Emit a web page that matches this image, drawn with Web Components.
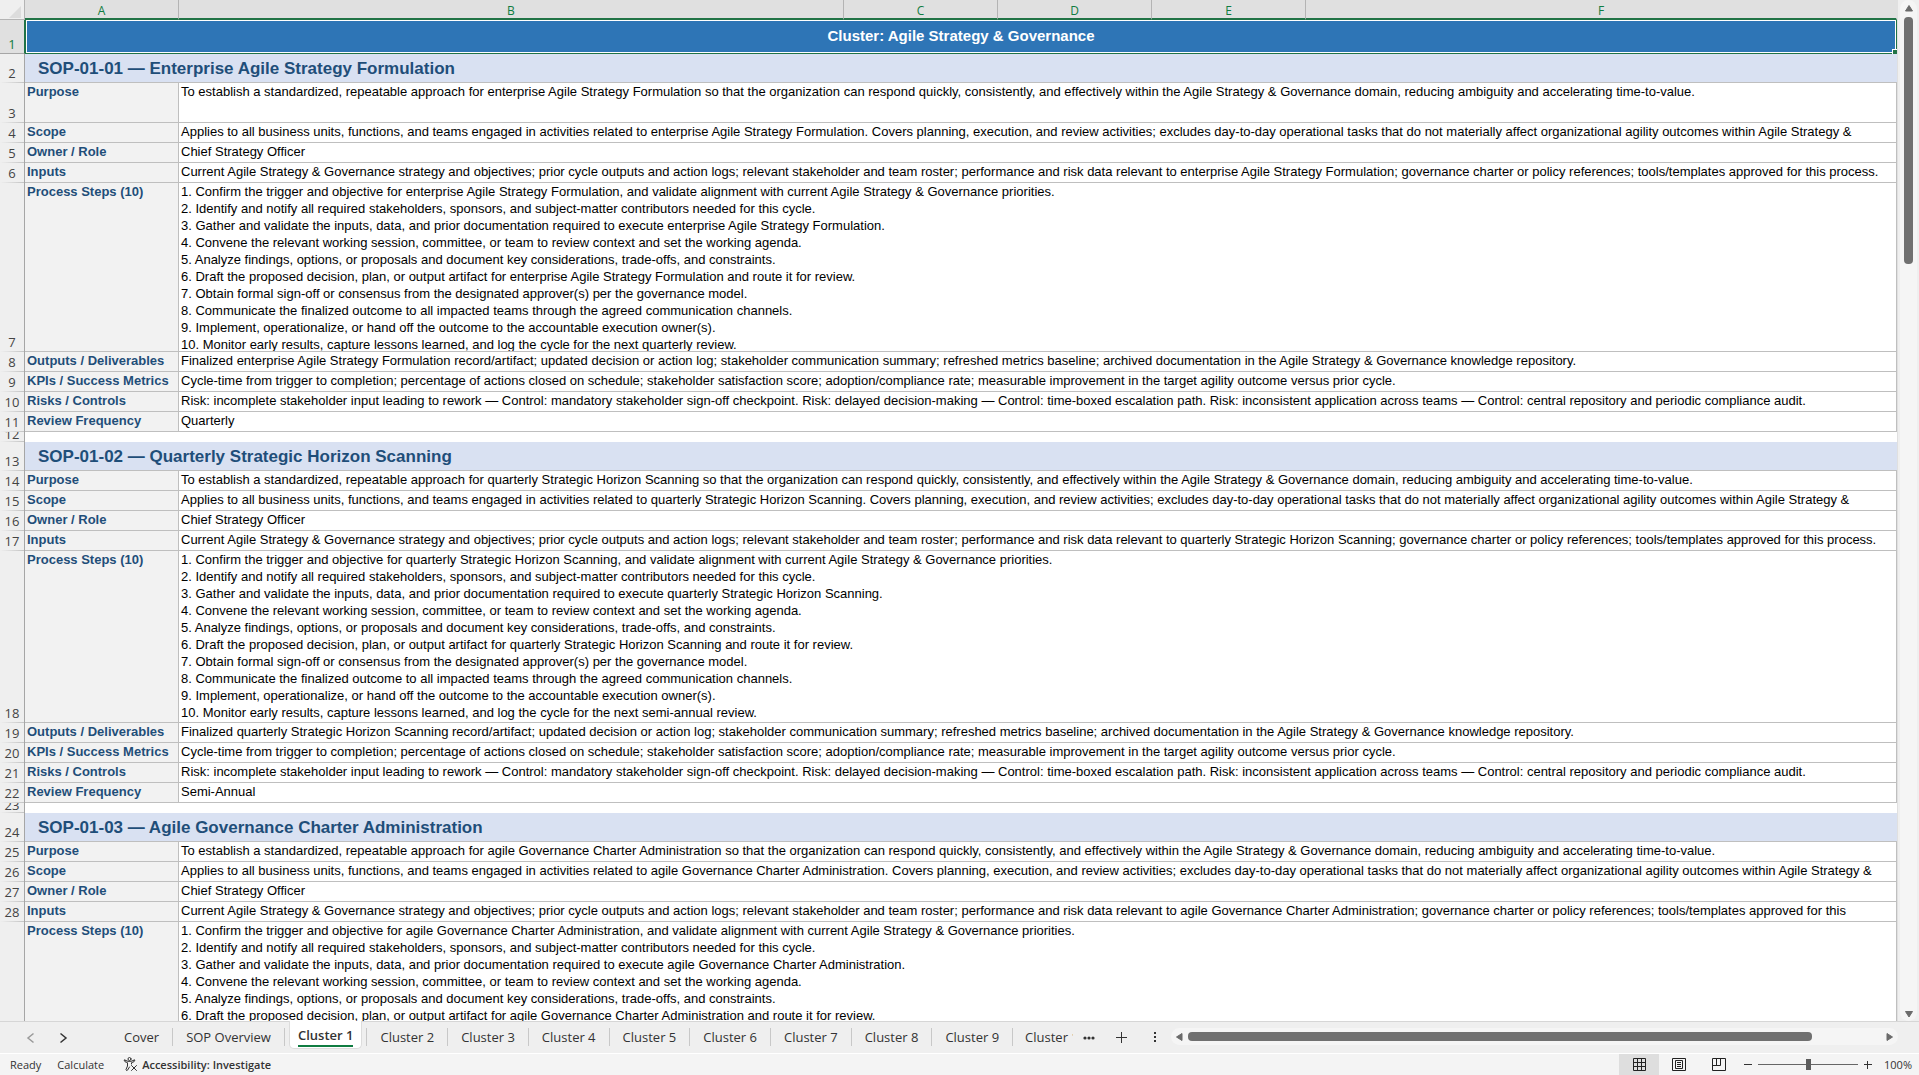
<!DOCTYPE html>
<html lang="en">
<head>
<meta charset="utf-8">
<title>Agile SOP Workbook</title>
<style>
  html, body {
    margin: 0;
    height: 100%;
    overflow: hidden;
  }
  body {
    font-family: "Liberation Sans", Arial, sans-serif;
    font-size: 13px;
    --ui-font: "Open Sans", "Noto Sans", sans-serif;
    --line: #bfbfbf;
    --green: #107c41;
    --select: #217346;
  }
</style>
</head>
<body>
<work-book></work-book>

<script>
const BASE = `
  * { box-sizing: border-box; }
  h2, ol, input, button { margin: 0; padding: 0; }
  button { border: 0; background: none; font: inherit; color: inherit; }`

// what differs between the procedures, everything else is shared wording
const SOPS = [
  { id: 'SOP-01-01', level: 'Enterprise', name: 'Agile Strategy Formulation', review: 'Quarterly', cycle: 'quarterly', purpose: 40, steps: 169, inputsEnd: ' process.' },
  { id: 'SOP-01-02', level: 'Quarterly', name: 'Strategic Horizon Scanning', review: 'Semi-Annual', cycle: 'semi-annual', purpose: 20, steps: 172, inputsEnd: ' process.' },
  { id: 'SOP-01-03', level: 'Agile', name: 'Governance Charter Administration', review: 'Annual', cycle: 'annual', purpose: 20, steps: 172, inputsEnd: '' }
]

class WorkBook extends HTMLElement {
  constructor () {
    super()
    this.attachShadow({ mode: 'open' })
  }

  connectedCallback () {
    this.shadowRoot.innerHTML = `
      <style>
        ${BASE}
        :host {
          display: flex;
          flex-direction: column;
          height: 100vh;
          background: #efefef;
        }
        main {
          display: flex;
          flex: 1;
          min-height: 0;
        }
        sheet-grid { flex: 1; min-width: 0; }
      </style>
      <main>
        <sheet-grid></sheet-grid>
        <scroll-bar direction="vertical"></scroll-bar>
      </main>
      <sheet-tabs></sheet-tabs>
      <status-bar></status-bar>`
  }
}

class SheetGrid extends HTMLElement {
  constructor () {
    super()
    this.attachShadow({ mode: 'open' })
    this.number = 1
  }

  connectedCallback () {
    this.shadowRoot.innerHTML = `
      <style>
        ${BASE}
        :host {
          display: block;
          overflow: hidden;
          background: #fff;
        }
        table {
          width: 100%;
          table-layout: fixed;
          border-collapse: separate;
          border-spacing: 0;
        }
        .num { width: 25px; }
        .narrow { width: 154px; }
        .wide { width: 665px; }
        thead th {
          height: 20px;
          padding: 4px 0 0;
          background: #e0e0e0;
          border-right: 1px solid #b4b4b4;
          border-bottom: 2px solid var(--select);
          color: var(--green);
          font: 12px/14px var(--ui-font);
        }
        thead th:first-child {
          background: #efefef;
          border-bottom: 1px solid #b4b4b4;
        }
        thead th:last-child { border-right-color: #e0e0e0; }
        thead svg { display: block; margin: 0 3px 0 auto; }
        tbody th, tbody td {
          padding: 0;
          vertical-align: top;
          text-align: left;
          font-weight: normal;
        }
        .row {
          height: var(--h);
          background: linear-gradient(to right, #efefef, #c4c4c4) bottom / 100% 1px no-repeat #efefef;
          border-right: 1px solid #a6a6a6;
          color: #444;
          font-family: var(--ui-font);
        }
        .row div {
          height: calc(var(--h) - 1px);
          display: flex;
          align-items: flex-end;
          justify-content: center;
          overflow: hidden;
          line-height: 17px;
        }
        .row.short div { align-items: flex-start; }
        .row.short span { margin-top: -6px; }
        .row.active {
          background: #e0e0e0;
          border-right-color: var(--select);
          border-bottom: 1px solid #a6a6a6;
          color: var(--green);
        }
        .title {
          position: relative;
          background: #2e75b6;
          border: 1px solid var(--select);
          border-top: 0;
          box-shadow: inset 0 0 0 1px #fff;
          color: #fff;
          text-align: center;
          font-size: 15px;
          font-weight: bold;
          line-height: 31px;
        }
        /* fill handle */
        .title::after {
          content: "";
          position: absolute;
          right: -1px;
          bottom: -1px;
          width: 4px;
          height: 4px;
          border: 1px solid #fff;
          border-width: 1px 0 0 1px;
          background: var(--select);
        }
        .heading {
          background: #d9e1f2;
          border-bottom: 1px solid var(--line);
        }
        h2 {
          padding: 2px 0 0 13px;
          color: #1f4e79;
          font-size: 17px;
          line-height: 26px;
        }
        .label, .text {
          border-right: 1px solid var(--line);
          border-bottom: 1px solid var(--line);
        }
        tbody .label {
          background: #f2f2f2;
          color: #1f4e79;
          font-weight: bold;
        }
        .cell {
          height: calc(var(--h) - 1px);
          padding: 0 2px;
          overflow: hidden;
          line-height: 17px;
          white-space: nowrap;
        }
        ol { list-style: none; }
      </style>
      <table>
        <colgroup>
          <col class="num"><col class="narrow"><col class="wide"><col class="narrow"><col class="narrow"><col class="narrow"><col>
        </colgroup>
        <thead>
          <tr>
            <th><svg width="12" height="12" viewBox="0 0 12 12"><path d="M12 0v12H0z" fill="#dcdcdc"/></svg></th>
            ${['A', 'B', 'C', 'D', 'E', 'F'].map(c => `<th scope="col">${c}</th>`).join('')}
          </tr>
        </thead>
        <tbody>
          ${this.row(34, '<td class="title" colspan="6">Cluster: Agile Strategy &amp; Governance</td>', 'active')}
          ${SOPS.map(sop => this.sop(sop)).join('')}
        </tbody>
      </table>`
  }

  row (height, cells, kind = '') {
    return `<tr style="--h: ${height}px"><th class="row ${kind}" scope="row"><div><span>${this.number++}</span></div></th>${cells}</tr>`
  }

  field (label, text, height = 20) {
    return this.row(height, `<th class="label" scope="row"><div class="cell">${label}</div></th><td class="text" colspan="5"><div class="cell">${text}</div></td>`)
  }

  sop (s) {
    const full = `${s.level.toLowerCase()} ${s.name}`
    const steps = [
      `Confirm the trigger and objective for ${full}, and validate alignment with current Agile Strategy &amp; Governance priorities.`,
      'Identify and notify all required stakeholders, sponsors, and subject-matter contributors needed for this cycle.',
      `Gather and validate the inputs, data, and prior documentation required to execute ${full}.`,
      'Convene the relevant working session, committee, or team to review context and set the working agenda.',
      'Analyze findings, options, or proposals and document key considerations, trade-offs, and constraints.',
      `Draft the proposed decision, plan, or output artifact for ${full} and route it for review.`,
      'Obtain formal sign-off or consensus from the designated approver(s) per the governance model.',
      'Communicate the finalized outcome to all impacted teams through the agreed communication channels.',
      'Implement, operationalize, or hand off the outcome to the accountable execution owner(s).',
      `Monitor early results, capture lessons learned, and log the cycle for the next ${s.cycle} review.`
    ]
    const last = s === SOPS[SOPS.length - 1]
    const shown = last ? steps.slice(0, 6) : steps
    let html = this.row(29, `<td class="heading" colspan="6"><h2>${s.id} — ${s.level} ${s.name}</h2></td>`)
    html += this.field('Purpose', `To establish a standardized, repeatable approach for ${full} so that the organization can respond quickly, consistently, and effectively within the Agile Strategy &amp; Governance domain, reducing ambiguity and accelerating time-to-value.`, s.purpose)
    html += this.field('Scope', `Applies to all business units, functions, and teams engaged in activities related to ${full}. Covers planning, execution, and review activities; excludes day-to-day operational tasks that do not materially affect organizational agility outcomes within Agile Strategy &amp;`)
    html += this.field('Owner / Role', 'Chief Strategy Officer')
    html += this.field('Inputs', `Current Agile Strategy &amp; Governance strategy and objectives; prior cycle outputs and action logs; relevant stakeholder and team roster; performance and risk data relevant to ${full}; governance charter or policy references; tools/templates approved for this${s.inputsEnd}`)
    html += this.field('Process Steps (10)', `<ol>${shown.map((t, i) => `<li>${i + 1}. ${t}</li>`).join('')}</ol>`, s.steps)
    // the window ends inside the last procedure
    if (last) return html.replace('<span>29</span>', '')
    html += this.field('Outputs / Deliverables', `Finalized ${full} record/artifact; updated decision or action log; stakeholder communication summary; refreshed metrics baseline; archived documentation in the Agile Strategy &amp; Governance knowledge repository.`)
    html += this.field('KPIs / Success Metrics', 'Cycle-time from trigger to completion; percentage of actions closed on schedule; stakeholder satisfaction score; adoption/compliance rate; measurable improvement in the target agility outcome versus prior cycle.')
    html += this.field('Risks / Controls', 'Risk: incomplete stakeholder input leading to rework — Control: mandatory stakeholder sign-off checkpoint. Risk: delayed decision-making — Control: time-boxed escalation path. Risk: inconsistent application across teams — Control: central repository and periodic compliance audit.')
    html += this.field('Review Frequency', s.review)
    html += this.row(10, '<td colspan="6"></td>', 'short')
    return html
  }
}

class ScrollBar extends HTMLElement {
  constructor () {
    super()
    this.attachShadow({ mode: 'open' })
  }

  connectedCallback () {
    const vertical = this.getAttribute('direction') === 'vertical'
    const arrow = (d, label) => `<button aria-label="${label}"><svg width="10" height="10" viewBox="0 0 10 10"><path d="${d}" fill="#6b6b6b" stroke="#6b6b6b" stroke-linejoin="round"/></svg></button>`
    this.shadowRoot.innerHTML = `
      <style>
        ${BASE}
        :host {
          display: flex;
          ${vertical ? 'width: 22px; padding: 0 2px; border-left: 1px solid #e0e0e0;' : 'height: 17px;'}
        }
        .track {
          flex: 1;
          display: flex;
          flex-direction: ${vertical ? 'column' : 'row'};
          align-items: center;
          gap: 1px;
          border-radius: 9px;
          background: #f5f5f5;
        }
        .rail {
          flex: 1;
          display: flex;
          flex-direction: inherit;
        }
        .thumb {
          border-radius: 4px;
          background: #707070;
          ${vertical ? 'width: 9px; height: 25%;' : 'height: 9px; width: 90%;'}
        }
        button {
          display: grid;
          place-items: center;
          width: 16px;
          height: 16px;
        }
      </style>
      <div class="track">
        ${vertical ? arrow('M5 2.500L8.500 8h-7z', 'Scroll up') : arrow('M2.500 5L8 1.500v7z', 'Scroll left')}
        <div class="rail"><div class="thumb"></div></div>
        ${vertical ? arrow('M5 9L8.500 3.500h-7z', 'Scroll down') : arrow('M7.500 5L2 1.500v7z', 'Scroll right')}
      </div>`
  }
}

class SheetTabs extends HTMLElement {
  constructor () {
    super()
    this.attachShadow({ mode: 'open' })
  }

  connectedCallback () {
    const names = ['Cover', 'SOP Overview']
    for (let i = 1; i < 10; i++) names.push(`Cluster ${i}`)
    this.shadowRoot.innerHTML = `
      <style>
        ${BASE}
        :host {
          display: flex;
          height: 32px;
          padding-right: 21px;
          border-top: 1px solid #d6d6d6;
          background: #efefef;
          color: #333;
          font: 13px/18px var(--ui-font);
        }
        .arrows {
          display: flex;
          align-items: center;
          gap: 20px;
          width: 111px;
          padding-left: 25px;
        }
        .arrows button { display: grid; }
        nav { display: flex; }
        nav button {
          height: 18px;
          margin-top: 6px;
          padding: 0 13px;
          border-right: 1px solid #c8c8c8;
          white-space: nowrap;
        }
        nav .active {
          height: 28px;
          margin: -1px 4px 0;
          padding: 0 8px;
          border: 1px solid #dcdcdc;
          border-top: 0;
          border-radius: 0 0 5px 5px;
          background: #fff;
          font-weight: 600;
        }
        /* separator after the raised tab */
        .active + button { border-left: 1px solid #c8c8c8; }
        .active span {
          display: block;
          height: 25px;
          border-bottom: 2px solid var(--green);
          line-height: 26px;
        }
        .last {
          width: 60px;
          height: 18px;
          margin-top: 6px;
          padding-left: 12px;
          overflow: hidden;
          text-align: left;
          white-space: nowrap;
        }
        .tools {
          display: flex;
          align-items: center;
          gap: 21px;
          padding: 0 9px 0 10px;
        }
        .tools button { display: grid; }
        scroll-bar { flex: 1; margin-top: 6px; }
      </style>
      <div class="arrows">
        <button aria-label="Previous sheets"><svg width="12" height="12" viewBox="0 0 12 12" fill="none" stroke="#9a9a9a" stroke-width="1.500"><path d="M8.500 1.500L3 6l5.500 4.500"/></svg></button>
        <button aria-label="Next sheets"><svg width="12" height="12" viewBox="0 0 12 12" fill="none" stroke="#333" stroke-width="1.500"><path d="M3.500 1.500L9 6l-5.500 4.500"/></svg></button>
      </div>
      <nav>
        ${names.map(n => n === 'Cluster 1' ? `<button class="active"><span>${n}</span></button>` : `<button>${n}</button>`).join('')}
      </nav>
      <button class="last">Cluster 10</button>
      <div class="tools">
        <button aria-label="More sheets"><svg width="12" height="4" viewBox="0 0 12 4" fill="#333"><circle cx="2" cy="2" r="1.600"/><circle cx="6" cy="2" r="1.600"/><circle cx="10" cy="2" r="1.600"/></svg></button>
        <button aria-label="New sheet"><svg width="11" height="11" viewBox="0 0 11 11" stroke="#333"><path d="M5.500 0v11M0 5.500h11"/></svg></button>
        <button aria-label="Resize"><svg width="14" height="11" viewBox="0 0 14 11" fill="#333"><path d="M6 0h2v2H6zM6 4h2v2H6zM6 8h2v2H6z"/></svg></button>
      </div>
      <scroll-bar direction="horizontal"></scroll-bar>`
  }
}

class StatusBar extends HTMLElement {
  constructor () {
    super()
    this.attachShadow({ mode: 'open' })
  }

  connectedCallback () {
    this.shadowRoot.innerHTML = `
      <style>
        ${BASE}
        :host {
          display: flex;
          align-items: center;
          height: 22px;
          padding: 0 7px 0 10px;
          border-top: 1px solid #fff;
          background: #f4f4f4;
          color: #333;
          font: 11px/20px var(--ui-font);
        }
        .calc { margin-left: 16px; }
        .check {
          display: flex;
          align-items: center;
          gap: 4px;
          margin: 0 auto 0 19px;
          font-weight: 600;
        }
        .view {
          display: grid;
          place-items: center;
          width: 40px;
          height: 21px;
        }
        .on { background: #dedede; }
        .zoom {
          display: flex;
          align-items: center;
          gap: 6px;
          margin-left: 5px;
        }
        .zoom button { display: grid; }
        output {
          width: 34px;
          text-align: right;
        }
        input {
          width: 100px;
          height: 12px;
          appearance: none;
          background: linear-gradient(#666, #666) center / 100% 1px no-repeat;
        }
        input::-webkit-slider-thumb {
          appearance: none;
          width: 5px;
          height: 11px;
          background: #5c5c5c;
        }
      </style>
      <span>Ready</span>
      <span class="calc">Calculate</span>
      <button class="check">
        <svg width="15" height="15" viewBox="0 0 15 15" fill="none" stroke="#333" stroke-linecap="round" stroke-linejoin="round"><circle cx="6.500" cy="2" r="1.500"/><path d="M1.500 3q-1 1 .5 1.700l2.500 1v3.300L3 12.500q.3 1.700 1.500.7L6.500 10M11.500 3q1 1-.5 1.700l-2.500 1v1.300M1.500 3l3.500 1.300h3L11.500 3M8.500 8.500l5 5M13.500 8.500l-5 5"/></svg>
        Accessibility: Investigate
      </button>
      <button class="view on" aria-label="Normal"><svg width="13" height="13" viewBox="0 0 13 13" fill="none" stroke="#222"><path d="M.5.5h12v12H.500zM4.500.5v12M8.500.5v12M.5 4.500h12M.5 8.500h12"/></svg></button>
      <button class="view" aria-label="Page layout"><svg width="14" height="13" viewBox="0 0 14 13" fill="none" stroke="#222"><path d="M.5.5h13v12H.500zM3.500 2.500h7v8h-7zM5 4.500h4M5 6.500h4M5 8.500h4"/></svg></button>
      <button class="view" aria-label="Page break preview"><svg width="14" height="13" viewBox="0 0 14 13" fill="none" stroke="#222"><path d="M.5.5h13v12H.500zM.5 7.500h8v-7M4.500.5v7"/></svg></button>
      <div class="zoom">
        <button aria-label="Zoom out"><svg width="8" height="8" viewBox="0 0 8 8" stroke="#333"><path d="M0 3.500h8"/></svg></button>
        <input type="range" min="0" max="100" value="50" aria-label="Zoom">
        <button aria-label="Zoom in"><svg width="8" height="8" viewBox="0 0 8 8" stroke="#333"><path d="M0 3.500h8M3.500 0v8"/></svg></button>
        <output>100%</output>
      </div>`
  }
}

customElements.define('scroll-bar', ScrollBar)
customElements.define('sheet-grid', SheetGrid)
customElements.define('sheet-tabs', SheetTabs)
customElements.define('status-bar', StatusBar)
customElements.define('work-book', WorkBook)
</script>
</body>
</html>
